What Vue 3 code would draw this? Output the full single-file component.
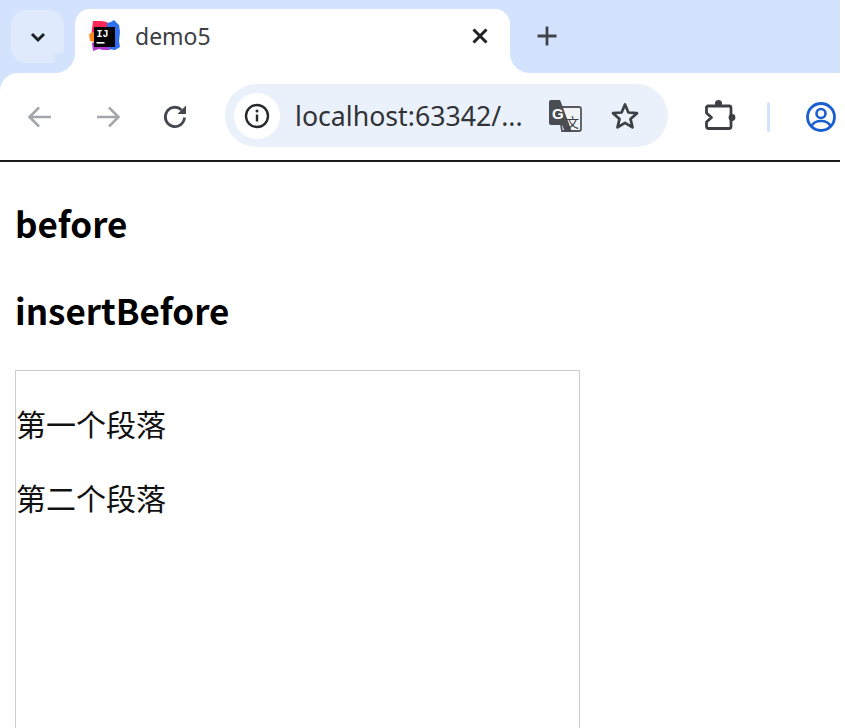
<script setup>
const paragraphs = ['第一个段落', '第二个段落']
</script>

<template>
  <div class="page">
    <header class="browser">
      <div class="tabstrip">
        <button class="tabsearch">
          <svg width="20" height="20" viewBox="0 0 20 20"><path d="M4 7l6 6 6-6" fill="none" stroke="#1f2328" stroke-width="3"/></svg>
        </button>
        <div class="tab">
          <svg class="favicon" width="32" height="32" viewBox="0 0 32 32">
            <path d="M4 1h8l6 1 1 12-12 6-5-3 1-8z" fill="#fe2857"/>
            <path d="M18 3l4-1 3-2 5 5 1 7-1 9 1 6-5 3-6-1-3-10z" fill="#2f6ff0"/>
            <path d="M0 14l5-2 3 7-3 3-4-1z" fill="#fd8a1c"/>
            <path d="M3 23l6-3 10 4 2 6-7 0-4-1-6 2z" fill="#b03bd0"/>
            <rect x="5" y="7" width="21" height="20" fill="#000"/>
            <text x="7.500" y="17" class="ij">IJ</text>
            <rect x="7.500" y="22" width="8" height="1.600" fill="#fff"/>
          </svg>
          <span class="tabtitle">demo5</span>
          <svg class="close" width="20" height="20" viewBox="0 0 20 20"><path d="M3.500 3.500l13 13M16.500 3.500l-13 13" stroke="#1f2328" stroke-width="3"/></svg>
        </div>
        <svg class="plus" width="22" height="22" viewBox="0 0 22 22"><path d="M11 1.500v19M1.500 11h19" stroke="#40454c" stroke-width="2.800"/></svg>
      </div>

      <div class="toolbar">
        <span class="tool">
          <svg width="28" height="28" viewBox="0 0 28 28"><path d="M25 14H4M13 4.500L3.500 14l9.500 9.500" fill="none" stroke="#a4a7ab" stroke-width="2.600"/></svg>
        </span>
        <span class="tool">
          <svg width="28" height="28" viewBox="0 0 28 28"><path d="M3 14h21M15 4.500l9.500 9.500-9.500 9.500" fill="none" stroke="#a4a7ab" stroke-width="2.600"/></svg>
        </span>
        <span class="tool">
          <svg width="28" height="28" viewBox="0 0 28 28"><path d="M22.500 14.500a9.600 9.600 0 1 1-3-7.600" fill="none" stroke="#44484e" stroke-width="2.800"/><path d="M24 2.500v8.500h-8.500z" fill="#44484e"/></svg>
        </span>

        <div class="omnibox">
          <span class="chip">
            <svg width="26" height="26" viewBox="0 0 26 26"><circle cx="13" cy="13" r="11" fill="none" stroke="#26292d" stroke-width="2.400"/><path d="M13 11.500v7" stroke="#26292d" stroke-width="2.400"/><circle cx="13" cy="8" r="1.500" fill="#26292d"/></svg>
          </span>
          <span class="url">localhost:63342/...</span>
          <svg class="translate" width="34" height="34" viewBox="0 0 34 34">
            <path d="M10 8h21a2 2 0 0 1 2 2v20a2 2 0 0 1-2 2H14z" fill="#f2f3f5" stroke="#55595e" stroke-width="1.800"/>
            <path d="M3 1h9l2 5 10 27h-7l-3-7H3a2 2 0 0 1-2-2V3a2 2 0 0 1 2-2z" fill="#4a4d52"/>
            <text x="4" y="20" class="g">G</text>
            <text x="18" y="28" class="wen">文</text>
          </svg>
          <svg class="star" width="30" height="30" viewBox="0 0 30 30"><path d="M15 3.500l3.400 8 8.600.700-6.500 5.700 2 8.500-7.500-4.500-7.500 4.500 2-8.500L3 12.200l8.600-.7z" fill="none" stroke="#3c4045" stroke-width="2.700" stroke-linejoin="round"/></svg>
        </div>

        <svg class="puzzle" width="32" height="32" viewBox="0 0 32 32">
          <path d="M3.500 7h21.500a2 2 0 0 1 2 2v18.500a2 2 0 0 1-2 2H4.500a2 2 0 0 1-2-2V23L7.500 18.500 2.500 14V8z" fill="none" stroke="#3c4045" stroke-width="2.800" stroke-linejoin="round"/>
          <circle cx="14.500" cy="4.500" r="3.500" fill="#3c4045"/>
          <circle cx="28" cy="18.500" r="3.400" fill="#3c4045"/>
        </svg>
        <span class="divider"></span>
        <svg class="profile" width="32" height="32" viewBox="0 0 32 32"><circle cx="16" cy="16" r="13.500" fill="none" stroke="#1a5fd0" stroke-width="2.800"/><circle cx="16" cy="12.500" r="4.500" fill="none" stroke="#1a5fd0" stroke-width="2.600"/><path d="M6.500 25c2-4 5.500-5 9.500-5s7.500 1 9.500 5" fill="none" stroke="#1a5fd0" stroke-width="2.600"/></svg>
      </div>
      <div class="rule"></div>
    </header>

    <main class="content">
      <h3>before</h3>
      <h3>insertBefore</h3>
      <section class="box">
        <p v-for="text in paragraphs" :key="text">{{ text }}</p>
      </section>
    </main>
  </div>
</template>

<style>
html, body { margin: 0; background: #fff; }
</style>

<style scoped>
.page {
  width: 845px;
  height: 728px;
  overflow: hidden;
  background: #fff;
  font-family: "Noto Sans", "Noto Sans CJK SC", sans-serif;
  color: #000;
}
.browser { width: 840px; background: linear-gradient(#d3e3fd 100px, #fff 100px); }
.tabstrip {
  height: 73px;
  box-sizing: border-box;
  background: #d3e3fd;
  display: flex;
  align-items: flex-start;
  padding-top: 9px;
  padding-left: 11px;
  position: relative;
}
.tabsearch {
  width: 53px;
  height: 53px;
  margin-top: 1px;
  padding: 0;
  border: 0;
  border-radius: 15px;
  background: #dfeafc;
  display: flex;
  align-items: center;
  justify-content: center;
}
.tab {
  margin-left: 11px;
  width: 435px;
  height: 64px;
  box-sizing: border-box;
  background: #fff;
  border-radius: 15px 15px 0 0;
  display: flex;
  align-items: center;
  padding: 0 20px 10px 14px;
  position: relative;
}
.tab::before,
.tab::after {
  content: "";
  position: absolute;
  bottom: 0;
  width: 20px;
  height: 20px;
}
.tab::before {
  left: -20px;
  background: radial-gradient(circle at 0 0, #d3e3fd 19.500px, #fff 20.500px);
}
.tab::after {
  right: -20px;
  background: radial-gradient(circle at 100% 0, #d3e3fd 19.500px, #fff 20.500px);
}
.favicon { flex: none; }
.ij {
  font: 700 10px "Liberation Mono", monospace;
  fill: #fff;
}
.tabtitle {
  margin-left: 14px;
  font-size: 23px;
  color: #3c4043;
  flex: 1;
}
.plus { margin-left: 26px; margin-top: 16px; }

.toolbar {
  height: 87px;
  box-sizing: border-box;
  background: #fff;
  border-top-left-radius: 18px;
  display: flex;
  align-items: center;
  padding: 0 0 0 6px;
}
.tool {
  width: 68px;
  display: flex;
  justify-content: center;
}
.omnibox {
  margin-left: 15px;
  width: 443px;
  height: 63px;
  border-radius: 32px;
  background: #ebf1fb;
  display: flex;
  align-items: center;
  padding-left: 9px;
  box-sizing: border-box;
  margin-top: -2px;
}
.chip {
  width: 46px;
  height: 46px;
  border-radius: 50%;
  background: #fff;
  display: flex;
  align-items: center;
  justify-content: center;
  flex: none;
}
.url {
  margin-left: 15px;
  font-size: 26.700px;
  color: #303338;
  white-space: nowrap;
  width: 237px;
}
.translate { margin-left: 16px; flex: none; }
.g {
  font: 700 15px "Liberation Sans", sans-serif;
  fill: #fff;
}
.wen {
  font: 400 13px "Noto Sans CJK SC", sans-serif;
  fill: #3c4045;
}
.star { margin-left: 28px; flex: none; }
.puzzle { margin-left: 36px; margin-top: -4px; flex: none; }
.divider {
  width: 3px;
  height: 30px;
  margin-left: 31px;
  background: #d3e3fd;
  border-radius: 2px;
  flex: none;
}
.profile { margin-left: 35px; flex: none; }
.rule { height: 2px; background: #1c1c1c; }

.content { padding-left: 15px; }
h3 {
  margin: 0;
  font-family: "Noto Sans CJK SC", sans-serif;
  font-size: 35px;
  line-height: 44px;
  font-weight: 700;
}
h3:first-child { margin-top: 39px; }
h3 + h3 { margin-top: 43px; }
.box {
  margin-top: 38px;
  width: 565px;
  height: 600px;
  box-sizing: border-box;
  border: 1px solid #ccc;
}
p {
  margin: 31px 0 30px;
  font-size: 30px;
  line-height: 43px;
  font-family: "Noto Sans CJK SC", sans-serif;
  color: #111;
}
</style>
